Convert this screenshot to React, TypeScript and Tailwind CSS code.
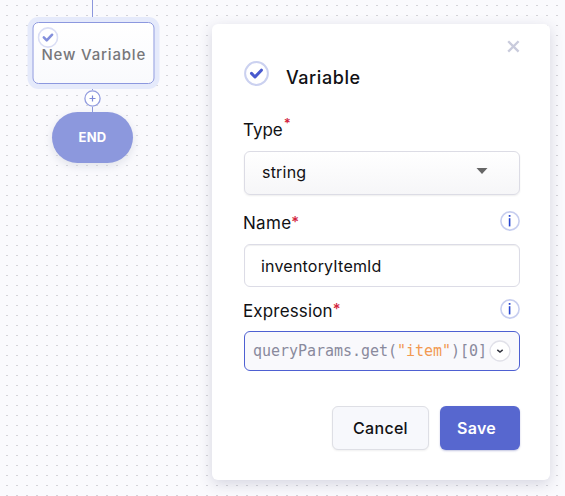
import React from "react";

function CheckBadge({ size, ring, tick }: { size: number; ring: string; tick: string }) {
  return (
    <svg width={size} height={size} viewBox="0 0 25 25" fill="none" className="block shrink-0">
      <circle cx="12.5" cy="12.5" r="11.4" fill="#fff" stroke={ring} strokeWidth="2" />
      <path d="M7.5 12.4l3.5 3.6 6.4-6.8" stroke={tick} strokeWidth="3" strokeLinecap="round" strokeLinejoin="round" />
    </svg>
  );
}

function InfoIcon() {
  return (
    <svg width="20" height="20" viewBox="0 0 20 20" fill="none" className="block">
      <circle cx="10" cy="10" r="9.1" fill="#fff" stroke="#c7ceef" strokeWidth="1.6" />
      <path d="M9.6 7.2v8.2" stroke="#2746d0" strokeWidth="1.6" />
      <path d="M9.6 4v1.8" stroke="#2746d0" strokeWidth="1.7" />
    </svg>
  );
}

function Label({ children, raised = false }: { children: React.ReactNode; raised?: boolean }) {
  return (
    <div className="-ml-px flex h-5 items-center text-[17px] leading-5 whitespace-nowrap">
      {children}
      <span className={raised ? "-mt-[15px] ml-px text-[13px] font-semibold text-[#d2243d]" : "-mt-[3px] text-[15px] font-medium text-[#d2243d]"}>*</span>
    </div>
  );
}

function Flow() {
  return (
    <div className="flex w-[185px] shrink-0 flex-col items-center">
      <div className="h-[22px] w-[1.5px] bg-[#8c97dd]" />
      <div className="relative h-[62px] w-[122px] translate-x-[0.5px] rounded-[6px] border-[1.5px] border-[#8c98df] bg-linear-to-b from-white to-[#f9fafd] shadow-[0_0_0_5px_#e5eafb]">
        <div className="absolute top-[4px] left-[4px]">
          <CheckBadge size={21} ring="#dadef5" tick="#8490dc" />
        </div>
        <div className="mt-[22px] pl-[1.5px] text-center text-[15px] leading-5 font-medium tracking-[0.82px] whitespace-nowrap text-[#77777b]">New Variable</div>
      </div>
      <div className="h-[6px] w-[1.5px] bg-[#8c97dd]" />
      <svg width="17" height="17" viewBox="0 0 17 17" fill="none" className="block">
        <circle cx="8.5" cy="8.5" r="7.6" fill="#fff" stroke="#929cdf" strokeWidth="1.3" />
        <path d="M5.5 8.5h6M8.5 5.5v6" stroke="#7d89d8" strokeWidth="1.2" />
      </svg>
      <div className="h-[5px] w-[1.5px] bg-[#8c97dd]" />
      <div className="flex h-[51px] w-[81px] items-center justify-center rounded-full bg-[#8c98dd] text-[13px] font-bold tracking-[0.2px] text-white shadow-[0_3px_8px_#b9bdcc66]">END</div>
    </div>
  );
}

function VariablePanel() {
  return (
    <div className="mt-6 ml-[27px] h-[456px] w-[338px] shrink-0 rounded-[6px] bg-white pr-[30px] pl-8 text-[#111114] shadow-[0_4px_14px_#3c3c6430]">
      <div className="flex h-[37px] justify-end pt-4">
        <svg width="13" height="13" viewBox="0 0 13 13" className="block">
          <path d="M1.2 1.2l10.4 10.4M11.6 1.2L1.2 11.6" stroke="#c9cbdc" strokeWidth="2.3" />
        </svg>
      </div>
      <div className="flex h-[25px] items-center">
        <CheckBadge size={25} ring="#cbd1f0" tick="#4859ce" />
        <span className="mt-[8px] ml-[17px] text-[18px] leading-6 font-medium tracking-[0.55px]">Variable</span>
      </div>
      <div className="mt-[34px]">
        <Label raised><span>Type</span></Label>
      </div>
      <div className="mt-[11px] flex h-[44px] items-center justify-between rounded-[6px] border border-[#dcdce5] bg-linear-to-b from-white to-[#f6f6f8] pr-[31px] pl-[17px] text-[16px] tracking-[0.2px] shadow-[0_1px_2px_#00000012]">
        <span className="-mt-[3px]">string</span>
        <svg width="12" height="6" viewBox="0 0 12 6" className="-mt-[5px] block"><path d="M.5 0h11L6 6z" fill="#666" /></svg>
      </div>
      <div className="mt-4 flex h-5 items-center justify-between">
        <div className="mt-1"><Label><span className="tracking-[0.3px]">Name</span></Label></div>
        <InfoIcon />
      </div>
      <div className="mt-[13px] flex h-[43px] items-center rounded-[6px] border border-[#dcdce6] bg-white pl-4 text-[16px] tracking-[0.2px] shadow-[inset_0_1px_1px_#00000010]">
        <span>inventoryItemId</span>
      </div>
      <div className="mt-3 flex h-5 items-center justify-between">
        <div className="mt-[3px]"><Label><span className="tracking-[0.15px]">Expression</span></Label></div>
        <InfoIcon />
      </div>
      <div className="mt-3 flex h-[40px] items-center justify-between rounded-[6px] border border-[#4e60d2] bg-[#f9f9fc] pr-2 pl-2 font-['DejaVu_Sans_Mono',monospace] text-[15px] tracking-[-0.03px] whitespace-nowrap text-[#898a9d]">
        <span>queryParams.get(<span className="text-[#f29a52]">"item"</span>)[0]</span>
        <svg width="22" height="22" viewBox="0 0 22 22" fill="none" className="block shrink-0">
          <circle cx="11" cy="11" r="10" fill="#fff" stroke="#e1e1e9" strokeWidth="1.3" />
          <path d="M8.3 9.9l2.7 2.1 2.7-2.1" stroke="#333540" strokeWidth="1.5" />
        </svg>
      </div>
      <div className="mt-[35px] flex justify-end gap-[11px] text-[16px] font-medium">
        <button className="h-[44px] w-[97px] rounded-[6px] border border-[#dedfe5] bg-[#f7f8fc] tracking-[0.3px] shadow-[0_1px_2px_#00000010]">Cancel</button>
        <button className="h-[44px] w-[80px] rounded-[6px] bg-[#5767cf] pr-[7px] font-semibold tracking-[0.3px] text-white shadow-[0_1px_2px_#3c46a050]">Save</button>
      </div>
    </div>
  );
}

export default function App() {
  return (
    <div className="flex h-[496px] w-[565px] overflow-hidden bg-[#fafafd] bg-[radial-gradient(1.2px_0.8px_at_7px_5.5px,#d4d4d9_99%,transparent_100%)] bg-[size:10px_10px] font-[Inter,sans-serif]">
      <Flow />
      <VariablePanel />
    </div>
  );
}
